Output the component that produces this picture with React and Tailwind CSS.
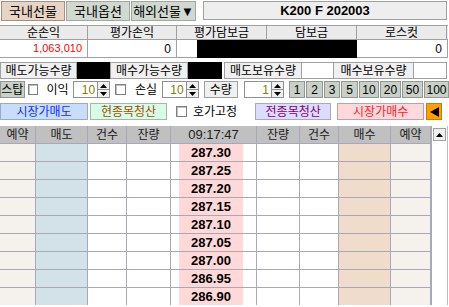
import React from "react";

function Up() {
  return (
    <svg width="7" height="4" viewBox="0 0 7 4"><polygon points="0,4 7,4 3.5,0" fill="#000" /></svg>
  );
}
function Down() {
  return (
    <svg width="7" height="4" viewBox="0 0 7 4"><polygon points="0,0 7,0 3.5,4" fill="#000" /></svg>
  );
}

function Spin({ fw, val }) {
  return (
    <div className="flex h-[17px]">
      <div className={`${fw} h-full bg-white border border-[#909090] border-r-0 flex items-center justify-end pr-[2px] text-[#808000] text-[12px]`}>
        {val}
      </div>
      <div className="w-[13px] h-full flex flex-col border border-[#909090] bg-[#f0f0f0]">
        <div className="flex-1 flex items-center justify-center border-b border-[#909090]"><Up /></div>
        <div className="flex-1 flex items-center justify-center"><Down /></div>
      </div>
    </div>
  );
}

function Check({ cls }) {
  return <div className={`${cls} w-[11px] h-[11px] bg-white border border-[#808080] shadow-[inset_1px_1px_0_#c0c0c0]`} />;
}

function NumBtn({ w, children }) {
  return (
    <div className={`${w} h-[17px] bg-[#c8d0c8] border border-[#909890] flex items-center justify-center text-[12px]`}>
      {children}
    </div>
  );
}

const prices = ["287.30", "287.25", "287.20", "287.15", "287.10", "287.05", "287.00", "286.95", "286.90"];

export default function App() {
  return (
    <div className="w-[449px] h-[307px] overflow-hidden bg-white relative font-['Liberation_Sans','Noto_Sans_CJK_KR',sans-serif] text-[12px] leading-none text-black">
      {/* Row 1 */}
      <div className="flex h-[20px] mt-px pl-px">
        <div className="w-[64px] h-full bg-[#e8d4c4] border border-[#a89080] flex items-center justify-center text-[13px]">국내선물</div>
        <div className="w-[64px] h-full ml-px bg-[#d0d8d0] border border-[#a0a8a0] flex items-center justify-center text-[13px]">국내옵션</div>
        <div className="w-[65px] h-full ml-px bg-[#d0d8d0] border border-[#a0a8a0] flex items-center justify-center text-[13px]">해외선물▼</div>
        <div className="w-[244px] h-[19px] ml-[7px] bg-[#eeeeee] border border-[#a0a0a0] flex items-center justify-center text-[13px] font-bold">K200 F 202003</div>
      </div>

      {/* Row 2 headers */}
      <div className="flex h-[15px] mt-[4px] border-y border-[#a0a0a0] bg-[#ebebeb] w-[448px]">
        <div className="w-[88px] border-r border-[#a0a0a0] flex items-center justify-center">순손익</div>
        <div className="w-[89px] border-r border-[#a0a0a0] flex items-center justify-center">평가손익</div>
        <div className="w-[90px] border-r border-[#a0a0a0] flex items-center justify-center">평가담보금</div>
        <div className="w-[90px] border-r border-[#a0a0a0] flex items-center justify-center">담보금</div>
        <div className="w-[90px] border-r border-[#a0a0a0] flex items-center justify-center">로스컷</div>
      </div>
      <div className="flex h-[18px] w-[448px]">
        <div className="w-[88px] border-r border-b border-[#a0a0a0] flex items-center justify-end pr-[5px] text-[11px] text-[#ff0000]">1,063,010</div>
        <div className="w-[89px] border-r border-b border-[#a0a0a0] flex items-center justify-end pr-[5px] text-[12px]">0</div>
        <div className="w-[20px] border-b border-[#a0a0a0]" />
        <div className="w-[160px] bg-black" />
        <div className="w-[91px] border-r border-b border-[#a0a0a0] flex items-center justify-end pr-[5px] text-[12px]">0</div>
      </div>

      {/* Row 3 */}
      <div className="flex h-[17px] mt-[4px]">
        <div className="w-[77px] h-full bg-[#f0f0f0] border border-[#a0a0a0] flex items-center justify-center">매도가능수량</div>
        <div className="w-[33px] h-full bg-black" />
        <div className="w-[78px] h-full bg-[#f0f0f0] border border-[#a0a0a0] flex items-center justify-center">매수가능수량</div>
        <div className="w-[34px] h-full bg-black" />
        <div className="w-[78px] h-full ml-[2px] bg-[#f0f0f0] border border-[#a0a0a0] flex items-center justify-center">매도보유수량</div>
        <div className="w-[32px] h-full bg-white border border-l-0 border-[#a0a0a0]" />
        <div className="w-[80px] h-full bg-[#f0f0f0] border border-l-0 border-[#a0a0a0] flex items-center justify-center">매수보유수량</div>
        <div className="w-[33px] h-full bg-white border border-l-0 border-[#a0a0a0]" />
      </div>

      {/* Row 4 */}
      <div className="flex items-center h-[17px] mt-[2px]">
        <div className="w-[25px] h-full bg-[#c8d0c8] border border-[#909890] flex items-center justify-center">스탑</div>
        <Check cls="ml-[3px]" />
        <div className="ml-[8px] w-[24px]">이익</div>
        <div className="ml-[3px]"><Spin fw="w-[24px]" val="10" /></div>
        <Check cls="ml-[5px]" />
        <div className="ml-[9px] w-[24px]">손실</div>
        <div className="ml-[3px]"><Spin fw="w-[24px]" val="10" /></div>
        <div className="ml-[5px] w-[35px] h-full bg-[#f0f0f0] border border-[#a0a0a0] flex items-center justify-center">수량</div>
        <div className="ml-[6px]"><Spin fw="w-[27px]" val="1" /></div>
        <div className="ml-[5px] flex gap-px">
          <NumBtn w="w-[16px]">1</NumBtn>
          <NumBtn w="w-[17px]">2</NumBtn>
          <NumBtn w="w-[16px]">3</NumBtn>
          <NumBtn w="w-[17px]">5</NumBtn>
          <NumBtn w="w-[20px]">10</NumBtn>
          <NumBtn w="w-[21px]">20</NumBtn>
          <NumBtn w="w-[21px]">50</NumBtn>
          <NumBtn w="w-[25px]">100</NumBtn>
        </div>
      </div>

      {/* Row 5 */}
      <div className="flex items-center h-[17px] mt-[5px]">
        <div className="w-[88px] h-full bg-[#c8dcfc] border border-[#a0a8c0] flex items-center justify-center text-[#1030ff]">시장가매도</div>
        <div className="w-[77px] h-full ml-[2px] bg-[#d8fce8] border border-[#a0b8a8] flex items-center justify-center text-[#a05000]">현종목청산</div>
        <Check cls="ml-[9px]" />
        <div className="ml-[6px]">호가고정</div>
        <div className="w-[76px] h-full ml-[18px] bg-[#dcdcfc] border border-[#a8a8c0] flex items-center justify-center text-[#800080]">전종목청산</div>
        <div className="w-[87px] h-full ml-[6px] bg-[#ffd8dc] border border-[#c0a0a0] flex items-center justify-center text-[#ff2020]">시장가매수</div>
        <div className="w-[16px] h-full ml-[2px] bg-[#ffa000] border border-[#c08000] flex items-center justify-center">
          <svg width="9" height="10" viewBox="0 0 9 10"><polygon points="9,0 9,10 0,5" fill="#000" /></svg>
        </div>
      </div>

      {/* Table */}
      <div className="flex mt-[6px]">
        <div className="grid grid-cols-[35px_51px_38px_43px_85px_42px_38px_51px_39px] auto-rows-[17px] gap-px bg-[#a8a8b8] border-r border-[#a8a8b8] w-[432px] pr-px">
          {["예약", "매도", "건수", "잔량"].map((t, i) => (
            <div key={"h" + i} className="bg-[#c0c0c0] flex items-center justify-center text-[#202020]">{t}</div>
          ))}
          <div className="bg-[#c0c0c0] flex items-center justify-center text-[13px] text-[#202020]">09:17:47</div>
          {["잔량", "건수", "매수", "예약"].map((t, i) => (
            <div key={"h2" + i} className="bg-[#c0c0c0] flex items-center justify-center text-[#202020]">{t}</div>
          ))}
          {prices.map((p) => (
            <React.Fragment key={p}>
              <div className="bg-[#f5f2ee]" />
              <div className="bg-[#d3e1e8]" />
              <div className="bg-white" />
              <div className="bg-white" />
              <div className="bg-white flex">
                <div className="w-[8px]" />
                <div className="w-[64px] bg-[#ffd8d8] flex items-center justify-center font-bold text-[13px]">{p}</div>
              </div>
              <div className="bg-white" />
              <div className="bg-white" />
              <div className="bg-[#f0dcca]" />
              <div className="bg-[#f5f2ee]" />
            </React.Fragment>
          ))}
        </div>
        <div className="w-[16px] border-r border-[#c0c0c0] bg-white pt-[2px] pl-px">
          <div className="w-[13px] h-[13px] bg-[#f0f0f0] border border-[#a0a0a0] flex items-center justify-center">
            <svg width="7" height="4" viewBox="0 0 7 4"><polygon points="0,4 7,4 3.5,0" fill="#000" /></svg>
          </div>
        </div>
      </div>
    </div>
  );
}
